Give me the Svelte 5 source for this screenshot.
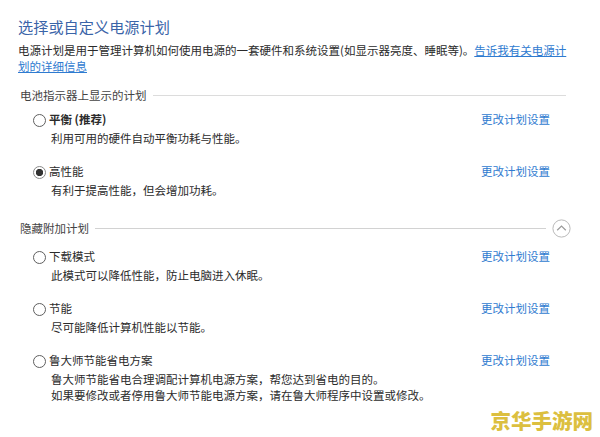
<script lang="ts">
  const shown = [
    { name: '平衡 (推荐)', bold: true, lines: ['利用可用的硬件自动平衡功耗与性能。'] },
    { name: '高性能', checked: true, lines: ['有利于提高性能，但会增加功耗。'] },
  ];
  const hidden = [
    { name: '下载模式', lines: ['此模式可以降低性能，防止电脑进入休眠。'] },
    { name: '节能', lines: ['尽可能降低计算机性能以节能。'] },
    {
      name: '鲁大师节能省电方案',
      lines: [
        '鲁大师节能省电合理调配计算机电源方案，帮您达到省电的目的。',
        '如果要修改或者停用鲁大师节能电源方案，请在鲁大师程序中设置或修改。',
      ],
    },
  ];
</script>

{#snippet plan(p)}
  <div class="plan">
    <div class="plan-head">
      <span class="radio" class:checked={p.checked}></span>
      <span class="name" class:bold={p.bold}>{p.name}</span>
      <a href="#top" class="change">更改计划设置</a>
    </div>
    {#each p.lines as line}
      <p>{line}</p>
    {/each}
  </div>
{/snippet}

<main>
  <h1>选择或自定义电源计划</h1>
  <p class="intro">
    电源计划是用于管理计算机如何使用电源的一套硬件和系统设置(如显示器亮度、睡眠等)。<a href="#top">告诉我有关电源计划的详细信息</a>
  </p>

  <div class="section first">
    <span>电池指示器上显示的计划</span>
    <i></i>
  </div>
  {#each shown as p}
    {@render plan(p)}
  {/each}

  <div class="section second">
    <span>隐藏附加计划</span>
    <i></i>
    <svg width="19" height="19" viewBox="0 0 19 19" aria-hidden="true">
      <circle cx="9.5" cy="9.5" r="8.6" fill="#fff" stroke="#b9b9b9" stroke-width="1" />
      <path d="M5.2 11.2 9.5 7l4.3 4.2" fill="none" stroke="#9a9a9a" stroke-width="1.2" />
    </svg>
  </div>
  <div class="hidden-plans">
    {#each hidden as p}
      {@render plan(p)}
    {/each}
  </div>

  <div class="mark">京华手游网</div>
</main>

<style>
  :global(body) {
    background: #fff;
  }
  main {
    position: relative;
    box-sizing: border-box;
    width: 600px;
    height: 437px;
    overflow: hidden;
    padding: 17px 34px 0 18px;
    background: #fff;
    color: #2b2b2b;
    font-family: "Noto Sans CJK SC", "Liberation Sans", sans-serif;
    font-size: 11.5px;
    line-height: 16px;
  }
  h1 {
    margin: 0;
    height: 18px;
    color: #3a64a8;
    font-size: 15.2px;
    font-weight: 400;
    line-height: 18px;
  }
  .intro {
    width: 549px;
    margin: 7px 0 0;
  }
  a {
    color: #2f7bd0;
  }
  .intro a {
    text-decoration: underline;
  }
  .section {
    display: flex;
    align-items: center;
    gap: 6px;
    height: 16px;
    padding-left: 2px;
    color: #444;
  }
  .section i {
    flex: 1;
    height: 1px;
    background: #dcdcdc;
  }
  .first {
    margin-top: 13px;
  }
  .second {
    margin-top: 5px;
    margin-right: -5px;
  }
  .second i {
    background: #d2d2d2;
  }
  .plan {
    height: 52px;
    padding-left: 15px;
  }
  .first + .plan {
    margin-top: 8px;
  }
  .hidden-plans {
    margin-top: 12px;
  }
  .plan-head {
    display: flex;
    align-items: center;
    height: 16px;
  }
  .radio {
    box-sizing: border-box;
    flex: none;
    width: 13px;
    height: 13px;
    margin: 2px 3px 0 0;
    border: 1px solid #5f5f5f;
    border-radius: 50%;
    background: #fff;
  }
  .radio.checked {
    border-color: #8a8a8a;
    background: radial-gradient(circle, #333 0 3.4px, #fff 3.9px);
  }
  .name.bold {
    font-weight: 700;
  }
  .change {
    margin-left: auto;
    margin-right: 16px;
    width: 69px;
    text-decoration: none;
    white-space: nowrap;
  }
  .plan p {
    margin: 3px 0 0;
    padding-left: 18px;
    white-space: nowrap;
  }
  .plan p + p {
    margin-top: 0;
  }
  .mark {
    position: absolute;
    right: 7px;
    bottom: 6px;
    color: #dcbf3f;
    font-size: 20.5px;
    font-weight: 900;
    line-height: 22px;
    white-space: nowrap;
  }
</style>
